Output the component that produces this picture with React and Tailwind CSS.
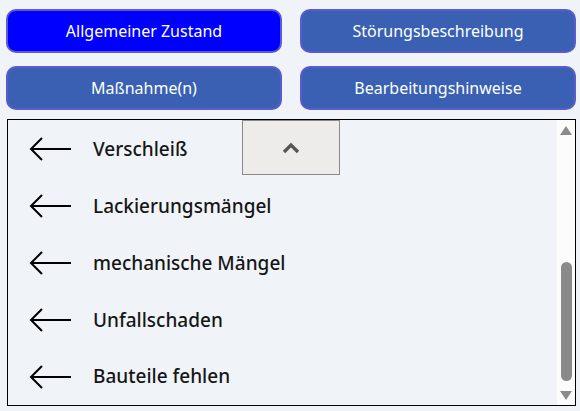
import React from "react";

const tabs = [
  { label: "Allgemeiner Zustand", active: true },
  { label: "Störungsbeschreibung" },
  { label: "Maßnahme(n)" },
  { label: "Bearbeitungshinweise" },
];

const items = [
  "Verschleiß",
  "Lackierungsmängel",
  "mechanische Mängel",
  "Unfallschaden",
  "Bauteile fehlen",
];

const ArrowLeft = () => (
  <svg width="44" height="26" viewBox="0 0 44 26" className="shrink-0">
    <path d="M2 13 H42 M13 2 L2 13 L13 24" fill="none" stroke="#000" strokeWidth="2" />
  </svg>
);

export default function App() {
  return (
    <div className="w-[580px] h-[411px] bg-[#f0f4f9] overflow-hidden" style={{ fontFamily: "'Noto Sans', sans-serif" }}>
      <div className="grid grid-cols-2 gap-x-[18px] gap-y-[13px] pt-[9px] pl-[6px] pr-[4px]">
        {tabs.map((t) => (
          <button
            key={t.label}
            className={
              "h-[44px] rounded-[10px] border-2 border-[#5b5bd0] text-white text-[16px] " +
              (t.active ? "bg-[#0000ff]" : "bg-[#3960b3]")
            }
          >
            {t.label}
          </button>
        ))}
      </div>

      <div className="relative mt-[9px] ml-[7px] w-[569px] h-[287px] border border-black flex">
        <div className="flex-1 flex flex-col pt-[1px]">
          {items.map((it) => (
            <div key={it} className="h-[57.3px] flex items-center gap-[20px] pl-[21px]">
              <ArrowLeft />
              <span className="text-[19px] font-medium text-[#161616]">{it}</span>
            </div>
          ))}
        </div>
        <div className="w-[18px] bg-[#fcfcfc] flex flex-col items-center justify-between pt-[6px] pb-[5px]">
          <div className="w-0 h-0 border-l-[6px] border-r-[6px] border-b-[9px] border-l-transparent border-r-transparent border-b-[#8a8a8a]" />
          <div className="flex-1 w-full flex flex-col justify-end items-center pb-[10px]">
            <div className="w-[11px] h-[119px] rounded-full bg-[#8a8a8a]" />
          </div>
          <div className="w-0 h-0 border-l-[6px] border-r-[6px] border-t-[9px] border-l-transparent border-r-transparent border-t-[#8a8a8a]" />
        </div>

        <div className="absolute left-[234px] top-0 w-[98px] h-[55px] bg-[#edecea] border border-[#8a8a8a] flex items-center justify-center">
          <svg width="18" height="12" viewBox="0 0 18 12">
            <path d="M2 10 L9 3 L16 10" fill="none" stroke="#555" strokeWidth="3.2" />
          </svg>
        </div>
      </div>
    </div>
  );
}
